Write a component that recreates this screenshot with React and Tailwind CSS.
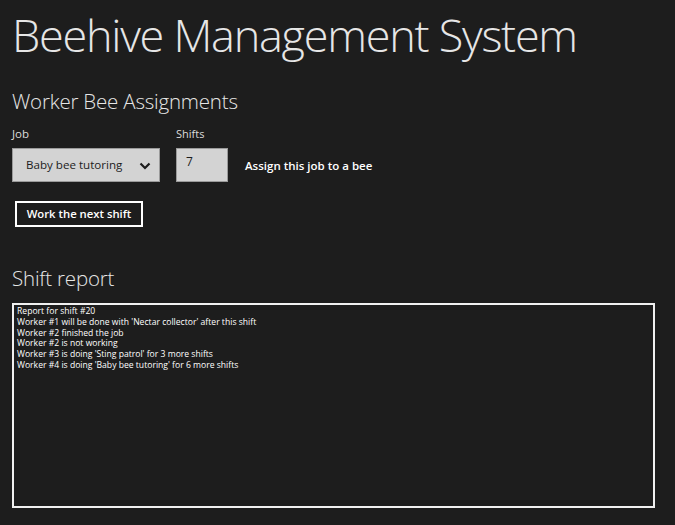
import React from "react";

export default function App() {
  const lines = [
    "Report for shift #20",
    "Worker #1 will be done with 'Nectar collector' after this shift",
    "Worker #2 finished the job",
    "Worker #2 is not working",
    "Worker #3 is doing 'Sting patrol' for 3 more shifts",
    "Worker #4 is doing 'Baby bee tutoring' for 6 more shifts",
  ];
  return (
    <div
      className="w-[675px] h-[525px] bg-[#1d1d1d] text-[#e6e6e6] overflow-hidden flex flex-col pl-[12px]"
      style={{ fontFamily: '"Open Sans", "Noto Sans", sans-serif' }}
    >
      <div className="h-[72px] pt-[5px] text-[45px] font-light leading-[60px] tracking-[-1.25px] whitespace-nowrap">
        Beehive Management System
      </div>
      <div className="h-[54px] pt-[14px] text-[20.5px] font-light leading-[30px] tracking-[-0.2px]">
        Worker Bee Assignments
      </div>
      <div className="flex items-start">
        <div className="flex flex-col w-[164px]">
          <div className="text-[11.5px] leading-[16px] h-[22px] text-[#dcdcdc]">Job</div>
          <div className="w-[148px] h-[34px] bg-[#d3d3d3] border border-[#9a9a9a] flex items-center justify-between pl-[13px] pr-[8px] text-[#1d1d1d] text-[11.6px]">
            <span>Baby bee tutoring</span>
            <svg width="12" height="8" viewBox="0 0 12 8" className="mt-[2px]">
              <path d="M1.5 1.5 L6 6 L10.5 1.5" fill="none" stroke="#1d1d1d" strokeWidth="2.2" />
            </svg>
          </div>
        </div>
        <div className="flex flex-col w-[69px]">
          <div className="text-[11px] leading-[16px] h-[22px] text-[#dcdcdc]">Shifts</div>
          <div className="w-[52px] h-[34px] bg-[#d3d3d3] border border-[#9a9a9a] pl-[9px] pt-[5px] text-[#1d1d1d] text-[12px] leading-[16px]">
            7
          </div>
        </div>
        <div className="pt-[32px] text-[11.5px] font-semibold text-white leading-[16px]">
          Assign this job to a bee
        </div>
      </div>
      <div className="pt-[19px] pl-[3px]">
        <div className="w-[128px] h-[26px] border-2 border-white flex items-center justify-center text-[11.3px] font-semibold text-white">
          Work the next shift
        </div>
      </div>
      <div className="h-[76px] pt-[36px] text-[20.5px] font-light leading-[30px] tracking-[-0.2px]">
        Shift report
      </div>
      <div className="w-[643px] h-[205px] border-2 border-[#f0f0f0] pl-[3px] pt-[1px] text-[8.6px] leading-[10.8px] text-white">
        {lines.map((l, i) => (
          <div key={i}>{l}</div>
        ))}
      </div>
    </div>
  );
}
